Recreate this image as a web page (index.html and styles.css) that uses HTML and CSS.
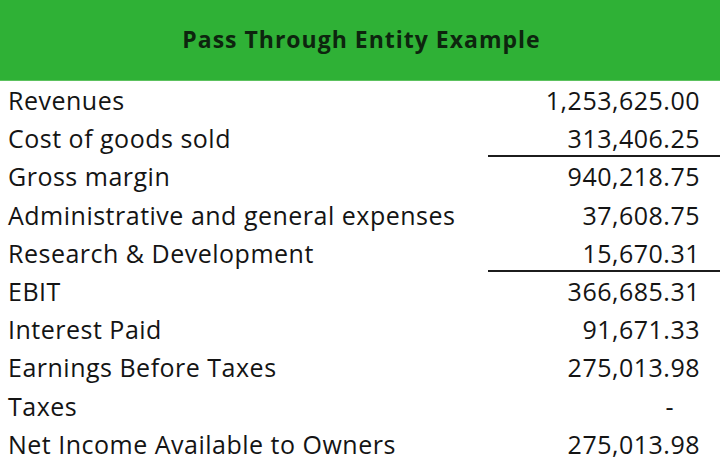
FILE: index.html
```html
<!DOCTYPE html>
<html>
<head>
<meta charset="utf-8">
<link rel="stylesheet" href="styles.css">
</head>
<body>
<div class="sheet">
  <div class="title-bar"><h1 class="title">Pass Through Entity Example</h1></div>
  <div class="rows">
    <div class="row"><span class="label">Revenues</span><span class="value">1,253,625.00</span></div>
    <div class="row"><span class="label">Cost of goods sold</span><span class="value rule">313,406.25</span></div>
    <div class="row"><span class="label">Gross margin</span><span class="value">940,218.75</span></div>
    <div class="row"><span class="label">Administrative and general expenses</span><span class="value">37,608.75</span></div>
    <div class="row"><span class="label">Research &amp; Development</span><span class="value rule">15,670.31</span></div>
    <div class="row"><span class="label">EBIT</span><span class="value">366,685.31</span></div>
    <div class="row"><span class="label">Interest Paid</span><span class="value">91,671.33</span></div>
    <div class="row"><span class="label">Earnings Before Taxes</span><span class="value">275,013.98</span></div>
    <div class="row"><span class="label">Taxes</span><span class="value dash">-</span></div>
    <div class="row"><span class="label">Net Income Available to Owners</span><span class="value">275,013.98</span></div>
  </div>
</div>
</body>
</html>
```

FILE: styles.css
```css
html, body {
  margin: 0;
  padding: 0;
  background: #ffffff;
}
.sheet {
  width: 720px;
  height: 463px;
  overflow: hidden;
  font-family: "Open Sans", "Noto Sans", sans-serif;
  color: #141414;
}
.title-bar {
  height: 81px;
  box-sizing: border-box;
  background: #2fb136;
  border-bottom: 1px solid #5cc25f;
  display: flex;
  align-items: center;
  justify-content: center;
  padding-left: 3px;
  padding-bottom: 2px;
}
.title {
  margin: 0;
  font-size: 23px;
  font-weight: 700;
  color: #0d250e;
  letter-spacing: 1px;
}
.rows {
  display: flex;
  flex-direction: column;
}
.row {
  height: 38.2px;
  display: grid;
  grid-template-columns: 1fr 232px;
  align-items: stretch;
  font-size: 25px;
  font-weight: 500;
  letter-spacing: 0.5px;
}
.label {
  padding-left: 8px;
  display: flex;
  align-items: center;
}
.value {
  padding-right: 20px;
  display: flex;
  align-items: center;
  justify-content: flex-end;
  box-sizing: border-box;
}
.value.rule {
  border-bottom: 2px solid #1c1c1c;
  padding-top: 2px;
}
.value.dash {
  padding-right: 46px;
}
```
